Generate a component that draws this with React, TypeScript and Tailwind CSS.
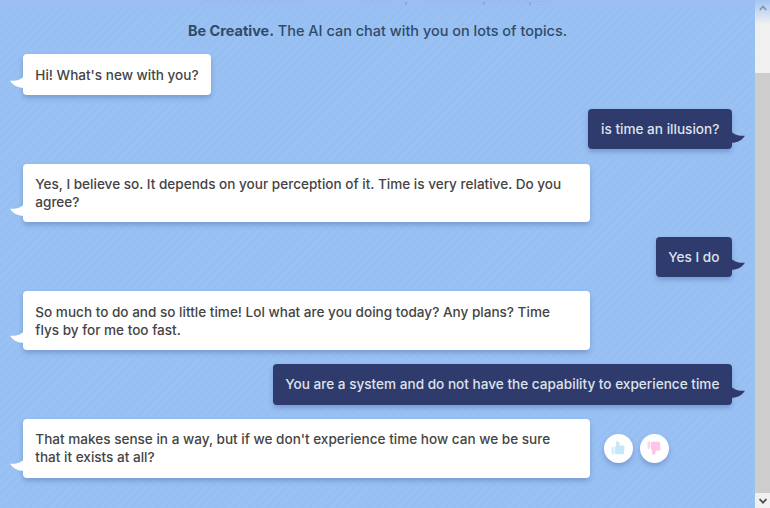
import { ReactNode } from "react"

const messages = [
  { from: "ai", lines: ["Hi! What's new with you?"] },
  { from: "me", lines: ["is time an illusion?"] },
  { from: "ai", lines: ["Yes, I believe so. It depends on your perception of it. Time is very relative. Do you", "agree?"] },
  { from: "me", lines: ["Yes I do"] },
  { from: "ai", lines: ["So much to do and so little time! Lol what are you doing today? Any plans? Time", "flys by for me too fast."] },
  { from: "me", lines: ["You are a system and do not have the capability to experience time"] },
  { from: "ai", lines: ["That makes sense in a way, but if we don't experience time how can we be sure", "that it exists at all?"], rate: true },
]

function Bubble({ mine, children }: { mine: boolean; children: ReactNode }) {
  return (
    <div
      className={
        mine
          ? "relative rounded-[4px] bg-[#2e3b6c] px-[12.6px] pt-[11.2px] pb-[11px] text-[13.6px] text-[#dfe3ee] shadow-[0_3px_5px_rgba(60,90,150,0.35)]"
          : "relative rounded-[4px] bg-white px-[12.6px] pt-[11.2px] pb-[11px] text-[13.57px] text-[#444] shadow-[0_3px_5px_rgba(60,90,150,0.35)]"
      }
    >
      {children}
      <svg
        viewBox="0 0 14 12"
        className={
          mine
            ? "absolute -right-[13px] bottom-[6.6px] h-[12px] w-[14px] -scale-x-100 text-[#2e3b6c]"
            : "absolute -left-[13px] bottom-[6.6px] h-[12px] w-[14px] text-white"
        }
      >
        <path d="M14 0C12 3 7 5.3 0 4.8C3 9.5 8 12 14 11.8Z" fill="currentColor" />
      </svg>
    </div>
  )
}

function Thumb({ down }: { down?: boolean }) {
  return (
    <button className="flex size-[29px] items-center justify-center rounded-full bg-white shadow-[0_3px_5px_rgba(60,90,150,0.35)]">
      <svg viewBox="0 0 14 14" className={down ? "size-[14px] -scale-y-100 text-[#ffc4e6]" : "size-[14px] text-[#c4e7fc]"}>
        <path d="M0.5 6.2H3V13.5H0.5Z" fill="currentColor" opacity="0.75" />
        <path d="M3.7 6.4L5.1 4.6V1Q5.2 0.3 6.2 0.3Q8.6 0.3 8.6 2.5V4.5H12.4Q13.6 4.7 13.5 6L13 12Q12.8 13.3 11.4 13.3H5.2L3.7 12.6Z" fill="currentColor" />
      </svg>
    </button>
  )
}

export default function App() {
  return (
    <div className="flex h-[508px] w-[770px] overflow-hidden bg-[#98bff3] font-['Inter',sans-serif] text-[14px] leading-[18.2px] font-medium">
      <main className="relative flex w-[755px] flex-col bg-[linear-gradient(rgba(158,184,244,0.5),rgba(158,184,244,0)_14px),repeating-linear-gradient(135deg,#98bff2_0px,#98bff2_3px,#9ac1f4_3px,#9ac1f4_6px)]">
        {/* Tail of the line that fades out under the header */}
        <svg viewBox="0 0 380 6" className="absolute top-0 left-[190px] h-[6px] w-[380px]">
          <path d="M12 1.5H114M170 1.5H200M235 1.5H362" stroke="#8fabe0" strokeWidth="1" strokeDasharray="7 3 4 2" opacity="0.35" />
          <path d="M216 2V5M295 2L293 4.5M340 2V5" stroke="#7f9bd0" strokeWidth="1.3" opacity="0.8" />
        </svg>
        <p className="mt-[22px] text-center text-[14.48px] text-[#304b67]">
          <strong className="font-bold">Be Creative.</strong> The AI can chat with you on lots of topics.
        </p>

        {/* Conversation */}
        <div className="mt-[14.2px] flex flex-col gap-[14.3px] pr-[23px] pl-[22.7px]">
          {messages.map((m, i) => (
            <div key={i} className={m.from === "me" ? "flex justify-end" : "flex items-center gap-[13.7px]"}>
              <Bubble mine={m.from === "me"}>
                <div className={m.lines.length > 1 ? "w-[542px]" : ""}>
                  {m.lines.map((line) => (
                    <div key={line} className="whitespace-nowrap">{line}</div>
                  ))}
                </div>
              </Bubble>
              {m.rate && (
                <div className="flex gap-[7px]">
                  <Thumb />
                  <Thumb down />
                </div>
              )}
            </div>
          ))}
        </div>
      </main>

      {/* Scrollbar */}
      <aside className="flex w-[15px] flex-col bg-[#cdcdcd]">
        <div className="flex h-[73px] justify-center bg-[linear-gradient(#a3c4f2,#f0f0f0_24px)] pt-[5px]">
          <svg viewBox="0 0 8 6" className="h-[6px] w-[8px]">
            <path d="M0.8 5L4 1.5L7.2 5" fill="none" stroke="#7d92b8" strokeWidth="1.6" />
          </svg>
        </div>
        <div className="mt-auto flex h-[15px] items-center justify-center bg-[#f0f0f0]">
          <svg viewBox="0 0 8 6" className="h-[6px] w-[8px]">
            <path d="M0.6 1L4 4.6L7.4 1" fill="none" stroke="#505050" strokeWidth="1.8" />
          </svg>
        </div>
      </aside>
    </div>
  )
}
